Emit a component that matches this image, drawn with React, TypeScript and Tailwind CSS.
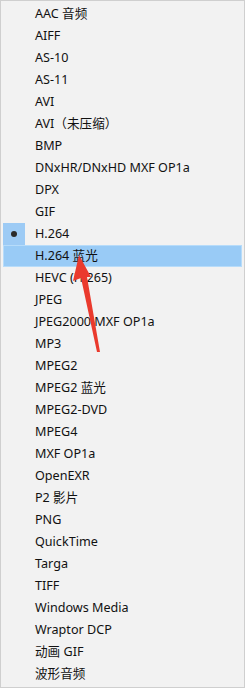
import React from "react";

const items = [
  "AAC 音频",
  "AIFF",
  "AS-10",
  "AS-11",
  "AVI",
  "AVI（未压缩）",
  "BMP",
  "DNxHR/DNxHD MXF OP1a",
  "DPX",
  "GIF",
  "H.264",
  "H.264 蓝光",
  "HEVC (H.265)",
  "JPEG",
  "JPEG2000 MXF OP1a",
  "MP3",
  "MPEG2",
  "MPEG2 蓝光",
  "MPEG2-DVD",
  "MPEG4",
  "MXF OP1a",
  "OpenEXR",
  "P2 影片",
  "PNG",
  "QuickTime",
  "Targa",
  "TIFF",
  "Windows Media",
  "Wraptor DCP",
  "动画 GIF",
  "波形音频",
];

export default function App() {
  return (
    <div
      className="relative w-[245px] h-[688px] bg-[#f2f2f2] border border-[#cfcfcf] p-[2px] text-[12.6px] text-[#111]"
      style={{ fontFamily: '"Noto Sans", "Noto Sans CJK SC", sans-serif' }}
    >
      {items.map((it, i) => {
        const checked = i === 10;
        const hover = i === 11;
        return (
          <div
            key={it}
            className={
              "relative h-[22px] flex items-center pl-[32px] " +
              (hover ? "bg-[#99cbf6] outline outline-1 -outline-offset-1 outline-[#b7dcfa]" : "")
            }
          >
            {checked && (
              <div className="absolute left-0 top-0 w-[22px] h-[22px] bg-[#9dcbf5] flex items-center justify-center">
                <div className="w-[6px] h-[6px] rounded-full bg-[#2a2a2a]" />
              </div>
            )}
            <span className="leading-none">{it}</span>
          </div>
        );
      })}
      <svg className="absolute left-0 top-0 pointer-events-none" width="245" height="688">
        <polygon
          points="78,254 90,276 86,276 99,351 96,351 80,277 72,280"
          fill="#ea3a2d"
        />
      </svg>
    </div>
  );
}
